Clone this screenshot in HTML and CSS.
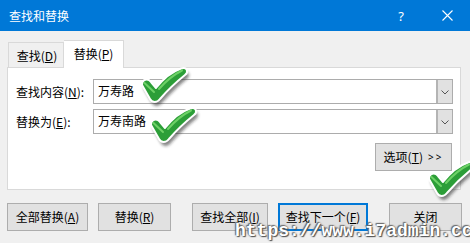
FILE: index.html
```html
<!DOCTYPE html>
<html lang="zh-CN">
<head>
<meta charset="utf-8">
<title>查找和替换</title>
<link rel="stylesheet" href="styles.css">
</head>
<body>
<div class="dialog">
  <div class="titlebar">
    <span class="title">查找和替换</span>
    <span class="cap help">?</span>
    <span class="cap close"><svg width="11" height="11" viewBox="0 0 11 11"><path d="M0.5 0.5 L10.5 10.5 M10.5 0.5 L0.5 10.5" stroke="#fff" stroke-width="1.1" fill="none"/></svg></span>
  </div>
  <div class="content">
    <div class="tabs">
      <div class="tab">查找(<u>D</u>)</div>
      <div class="tab active">替换(<u>P</u>)</div>
    </div>
    <div class="panel">
      <div class="row">
        <span class="label">查找内容(<u>N</u>):</span>
        <div class="combo"><span class="val">万寿路</span><span class="drop"><svg width="8" height="5" viewBox="0 0 8 5"><path d="M0.5 0.5 L4 4 L7.5 0.5" stroke="#555" stroke-width="1" fill="none"/></svg></span></div>
      </div>
      <div class="row">
        <span class="label">替换为(<u>E</u>):</span>
        <div class="combo"><span class="val">万寿南路</span><span class="drop"><svg width="8" height="5" viewBox="0 0 8 5"><path d="M0.5 0.5 L4 4 L7.5 0.5" stroke="#555" stroke-width="1" fill="none"/></svg></span></div>
      </div>
      <div class="opt-row">
        <div class="btn opts">选项(<u>T</u>) <span class="gg">&gt;&gt;</span></div>
      </div>
    </div>
    <div class="actions">
      <div class="btn w81">全部替换(<u>A</u>)</div>
      <div class="btn w73">替换(<u>R</u>)</div>
      <div class="btn w76 sep">查找全部(<u>I</u>)</div>
      <div class="btn w90 default">查找下一个(<u>F</u>)</div>
      <div class="btn w73 sep">关闭</div>
    </div>
  </div>

  <svg class="check c1" width="48" height="38" viewBox="0 0 48 38">
    <defs>
      <filter id="b1" x="-20%" y="-20%" width="140%" height="140%"><feGaussianBlur stdDeviation="1.4"/></filter>
      <path id="ck" d="M1 18 C1 12 7 11 10 15 L15 21 C22 12 30 5 40 1.5 C46 -0.5 48 5 44 8 C34 16 25 25 19 32 C16 36 11 36 9 32 Z"/>
    </defs>
    <use href="#ck" fill="#222" fill-opacity="0.55" transform="translate(2 4)" filter="url(#b1)"/>
    <use href="#ck" fill="#2c9e38" stroke="#fff" stroke-width="2" stroke-linejoin="round"/>
    <path d="M3.5 16 L13 25 M18 22 C25 14 32 8 41 3.5" stroke="#6dd166" stroke-width="2" stroke-linecap="round" fill="none"/>
  </svg>
  <svg class="check c2" width="48" height="38" viewBox="0 0 48 38">
    <use href="#ck" fill="#222" fill-opacity="0.55" transform="translate(2 4)" filter="url(#b1)"/>
    <use href="#ck" fill="#2c9e38" stroke="#fff" stroke-width="2" stroke-linejoin="round"/>
    <path d="M3.5 16 L13 25 M18 22 C25 14 32 8 41 3.5" stroke="#6dd166" stroke-width="2" stroke-linecap="round" fill="none"/>
  </svg>
  <svg class="check c3" width="48" height="38" viewBox="0 0 48 38">
    <use href="#ck" fill="#222" fill-opacity="0.55" transform="translate(2 4)" filter="url(#b1)"/>
    <use href="#ck" fill="#2c9e38" stroke="#fff" stroke-width="2" stroke-linejoin="round"/>
    <path d="M3.5 16 L13 25 M18 22 C25 14 32 8 41 3.5" stroke="#6dd166" stroke-width="2" stroke-linecap="round" fill="none"/>
  </svg>

  <div class="watermark">https://www.i7admin.cc</div>
</div>
</body>
</html>
```

FILE: styles.css
```css
* {
  box-sizing: border-box;
  margin: 0;
  padding: 0;
}

html, body {
  width: 470px;
  height: 243px;
  overflow: hidden;
}

body {
  background: #f0f0f0;
  font-family: "Noto Sans CJK SC", "Noto Sans", sans-serif;
  font-size: 12px;
  line-height: 16px;
  color: #000;
}

u {
  text-decoration: underline;
  text-underline-offset: 1px;
}

.dialog {
  position: relative;
  width: 470px;
  height: 243px;
}

.titlebar {
  height: 31px;
  background: #0078d7;
  color: #fff;
  display: flex;
  align-items: center;
  padding-left: 9px;
}

.title {
  flex: 1;
  font-size: 12px;
}

.cap {
  width: 46px;
  height: 31px;
  display: flex;
  align-items: center;
  justify-content: center;
}

.help {
  font-family: "Noto Sans", sans-serif;
  font-size: 13px;
}

.content {
  padding: 9px 8px 0 7px;
}

.tabs {
  display: flex;
  align-items: flex-end;
  padding-left: 1px;
}

.tab {
  height: 25px;
  width: 56px;
  text-align: center;
  padding-top: 5px;
  background: #f0f0f0;
  border: 1px solid #d9d9d9;
  border-bottom: none;
  padding-left: 2px;
}

.tab.active {
  position: relative;
  z-index: 1;
  width: 60px;
  height: 28px;
  padding-top: 5px;
  padding-left: 0;
  background: #fff;
  margin-bottom: -1px;
  border-left: none;
}

.panel {
  width: 454px;
  height: 123px;
  background: #fff;
  border: 1px solid #d9d9d9;
  padding: 11px 7px 0 8px;
}

.row {
  display: flex;
  align-items: center;
  height: 25px;
  margin-bottom: 5px;
}

.label {
  width: 77px;
  padding-top: 1px;
}

.combo {
  width: 360px;
  height: 25px;
  display: flex;
  border: 1px solid #acacac;
}

.val {
  flex: 1;
  padding-left: 4px;
  line-height: 22px;
}

.drop {
  width: 16px;
  background: #e1e1e1;
  border-left: 2px solid #b4b4b4;
  display: flex;
  align-items: center;
  justify-content: center;
  padding-top: 1px;
}

.opt-row {
  display: flex;
  justify-content: flex-end;
  margin-top: 9px;
  padding-right: 1px;
}

.btn {
  height: 28px;
  background: #e1e1e1;
  border: 1px solid #adadad;
  display: flex;
  align-items: center;
  justify-content: center;
}

.opts {
  width: 77px;
}

.gg {
  font-family: "Noto Sans", sans-serif;
  font-size: 10px;
  letter-spacing: 2px;
  margin-left: 5px;
}

.actions {
  display: flex;
  gap: 10px;
  margin-top: 13px;
}

.w81 { width: 81px; }
.w73 { width: 73px; }
.w76 { width: 76px; }
.w90 { width: 90px; }

.sep {
  margin-left: 11px;
}

.default {
  border: 2px solid #0078d7;
}

.check {
  position: absolute;
  overflow: visible;
}

.c1 { left: 141px; top: 67px; }
.c2 { left: 150px; top: 107px; }
.c3 { left: 428px; top: 161px; }

.watermark {
  position: absolute;
  left: 235px;
  top: 222px;
  font-family: "Liberation Mono", monospace;
  font-weight: bold;
  font-size: 18px;
  line-height: 18px;
  color: #fff;
  white-space: nowrap;
  text-shadow: 0 0 2px #444, 1px 1px 1px #555, -1px -1px 1px #777;
}
```
